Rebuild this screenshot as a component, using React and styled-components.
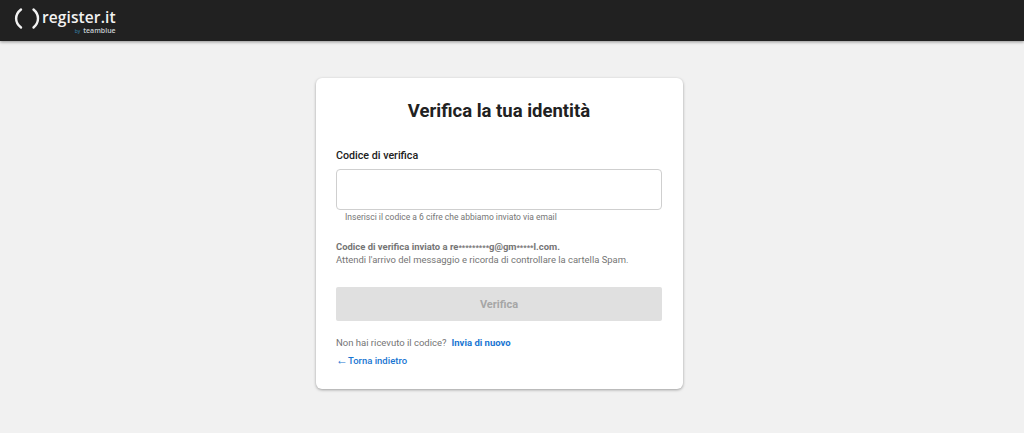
import styled, { createGlobalStyle } from "styled-components";

const GlobalStyle = createGlobalStyle`
  html, body {
    margin: 0;
    padding: 0;
    background: #f1f1f1;
    font-family: Roboto, "Liberation Sans", sans-serif;
  }
  * {
    box-sizing: border-box;
  }
`;

const Page = styled.div`
  width: 100%;
  height: 433px;
  overflow: hidden;
  background: #f1f1f1;
`;

const Header = styled.header`
  height: 41px;
  background: #212121;
  box-shadow: 0 1px 3px rgba(0, 0, 0, 0.4);
  display: flex;
  align-items: flex-start;
  padding: 8px 0 0 14px;
`;

const Logo = styled.div`
  display: flex;
  align-items: flex-start;
`;

const LogoMark = styled.svg`
  width: 27px;
  height: 22px;
  overflow: visible;
`;

const LogoName = styled.div`
  display: flex;
  flex-direction: column;
  margin-left: 1px;
`;

const LogoText = styled.span`
  font-family: "Open Sans", sans-serif;
  font-size: 15.5px;
  font-weight: 600;
  line-height: 18px;
  letter-spacing: 0.1px;
  color: #f2f2f2;
`;

const LogoBy = styled.span`
  align-self: flex-end;
  font-family: "Open Sans", sans-serif;
  font-size: 7px;
  font-weight: 600;
  line-height: 8px;
  margin-top: 1px;
  color: #c9d0d4;
  em {
    font-style: normal;
    font-weight: 400;
    color: #3b8db5;
    margin-right: 3px;
    font-size: 5px;
  }
`;

const Main = styled.main`
  display: flex;
  justify-content: center;
  padding-top: 37px;
  padding-right: 25px;
`;

const Card = styled.section`
  width: 367px;
  height: 311px;
  background: #fff;
  border-radius: 6px;
  box-shadow: 0 1px 3px rgba(0, 0, 0, 0.35);
  padding: 21px 21px 0 20px;
`;

const Title = styled.h1`
  margin: 0;
  font-size: 18.5px;
  line-height: 24px;
  font-weight: 700;
  color: #212121;
  text-align: center;
`;

const Label = styled.label`
  display: block;
  margin-top: 26px;
  font-size: 10.7px;
  line-height: 14px;
  font-weight: 500;
  color: #212121;
`;

const CodeInput = styled.input`
  display: block;
  width: 100%;
  height: 41px;
  margin-top: 6px;
  border: 1px solid #cfcfcf;
  border-radius: 4px;
  background: #fff;
  outline: none;
`;

const Hint = styled.p`
  margin: 1px 0 0;
  padding-left: 9px;
  font-size: 8.5px;
  line-height: 12px;
  color: #757575;
`;

const Notice = styled.p`
  margin: 17px 0 0;
  font-size: 9.45px;
  line-height: 13px;
  color: #757575;
  strong {
    font-weight: 700;
  }
`;

const Mask = styled.span`
  font-size: 7.5px;
  line-height: 0;
`;

const SubmitButton = styled.button`
  display: block;
  width: 100%;
  height: 34px;
  margin-top: 21px;
  border: 0;
  border-radius: 2px;
  background: #e0e0e0;
  color: #a6a6a6;
  font-family: inherit;
  font-size: 11px;
  font-weight: 700;
`;

const Row = styled.div`
  display: flex;
  align-items: center;
  margin-top: ${(p) => p.$top}px;
  font-size: 9.5px;
  line-height: 13px;
  color: #757575;
`;

const TextLink = styled.a`
  color: #1976d2;
  font-weight: ${(p) => (p.$bold ? 700 : 500)};
  margin-left: ${(p) => p.$left || 0}px;
  text-decoration: none;
`;

const Arrow = styled.span`
  font-family: "Liberation Sans", sans-serif;
  font-size: 12px;
  line-height: 0;
  font-weight: 400;
`;

export default function App() {
  return (
    <Page>
      <GlobalStyle />
      <Header>
        <Logo>
          <LogoMark viewBox="0 0 27 22" fill="none">
            <path d="M7 1.5C0.5 6.5 0.5 14.5 7 19.5" stroke="#f2f2f2" strokeWidth="2.4" strokeLinecap="round" />
            <path d="M19.5 1.5C25.5 6.5 25.5 14.5 19.5 19.5" stroke="#f2f2f2" strokeWidth="2.4" strokeLinecap="round" />
          </LogoMark>
          <LogoName>
            <LogoText>register.it</LogoText>
            <LogoBy>
              <em>by</em>teamblue
            </LogoBy>
          </LogoName>
        </Logo>
      </Header>
      <Main>
        <Card>
          <Title>Verifica la tua identità</Title>
          <Label htmlFor="code">Codice di verifica</Label>
          <CodeInput id="code" />
          <Hint>Inserisci il codice a 6 cifre che abbiamo inviato via email</Hint>
          <Notice>
            <strong>
              Codice di verifica inviato a re<Mask>*********</Mask>g@gm<Mask>*****</Mask>l.com.
            </strong>
            <br />
            Attendi l'arrivo del messaggio e ricorda di controllare la cartella Spam.
          </Notice>
          <SubmitButton disabled>Verifica</SubmitButton>
          <Row $top={15}>
            Non hai ricevuto il codice?
            <TextLink href="#" $bold $left={5}>
              Invia di nuovo
            </TextLink>
          </Row>
          <Row $top={5}>
            <TextLink href="#">
              <Arrow>←</Arrow>Torna indietro
            </TextLink>
          </Row>
        </Card>
      </Main>
    </Page>
  );
}
